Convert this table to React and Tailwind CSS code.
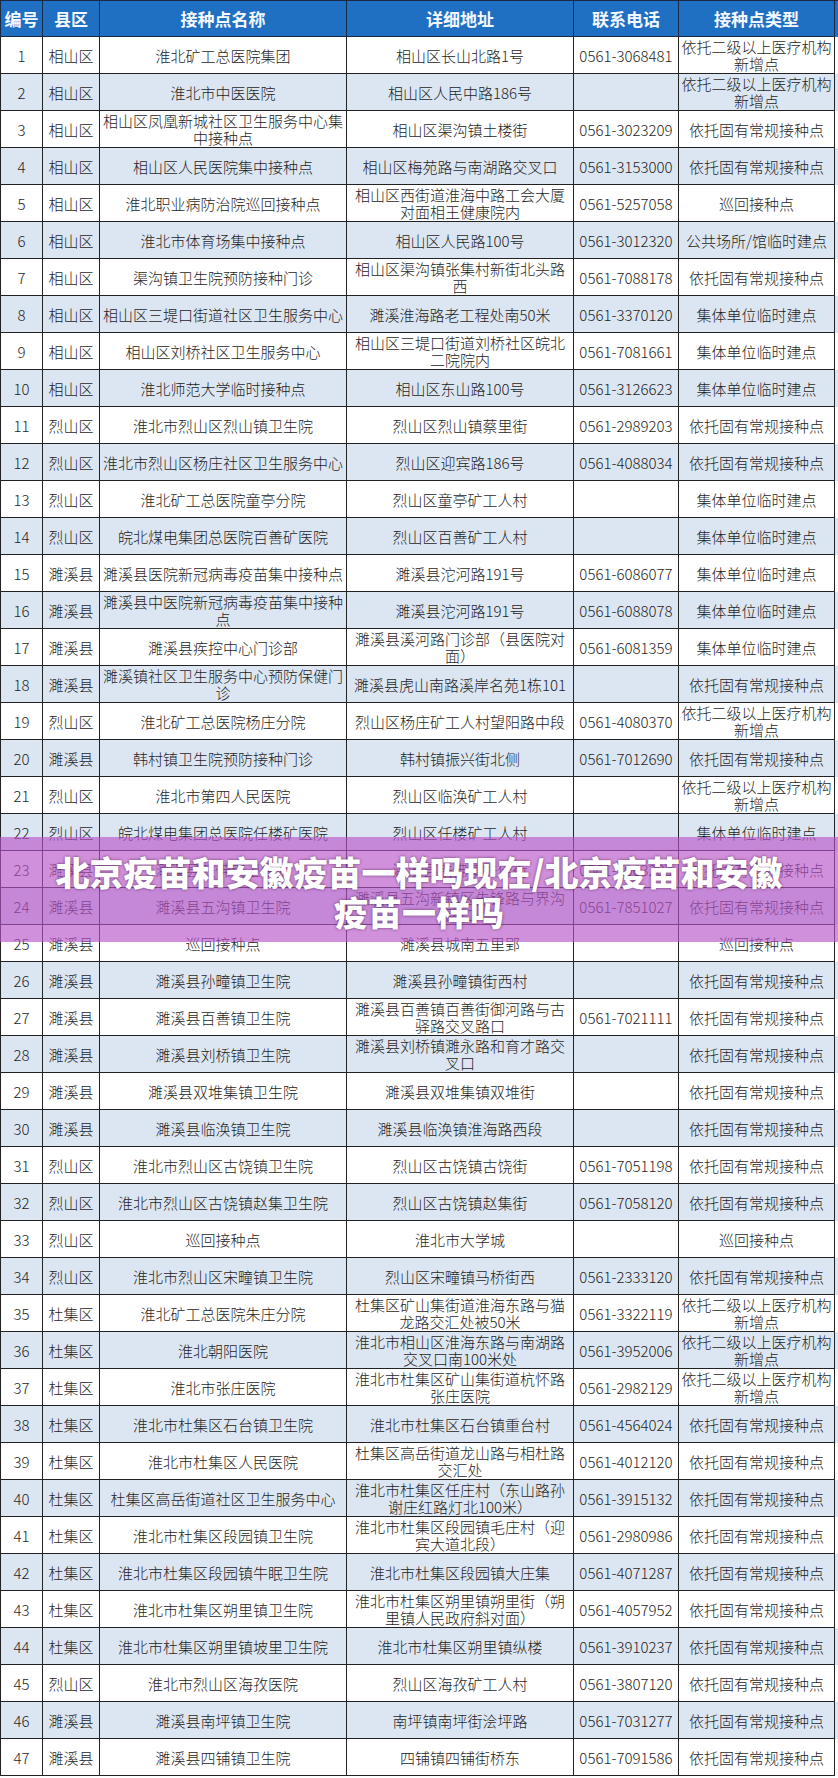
import React from "react";

const rows = [
    ["1", "相山区", "淮北矿工总医院集团", "相山区长山北路1号", "0561-3068481", "依托二级以上医疗机构新增点"],
    ["2", "相山区", "淮北市中医医院", "相山区人民中路186号", "", "依托二级以上医疗机构新增点"],
    ["3", "相山区", "相山区凤凰新城社区卫生服务中心集中接种点", "相山区渠沟镇土楼街", "0561-3023209", "依托固有常规接种点"],
    ["4", "相山区", "相山区人民医院集中接种点", "相山区梅苑路与南湖路交叉口", "0561-3153000", "依托固有常规接种点"],
    ["5", "相山区", "淮北职业病防治院巡回接种点", "相山区西街道淮海中路工会大厦对面相王健康院内", "0561-5257058", "巡回接种点"],
    ["6", "相山区", "淮北市体育场集中接种点", "相山区人民路100号", "0561-3012320", "公共场所/馆临时建点"],
    ["7", "相山区", "渠沟镇卫生院预防接种门诊", "相山区渠沟镇张集村新街北头路西", "0561-7088178", "依托固有常规接种点"],
    ["8", "相山区", "相山区三堤口街道社区卫生服务中心", "濉溪淮海路老工程处南50米", "0561-3370120", "集体单位临时建点"],
    ["9", "相山区", "相山区刘桥社区卫生服务中心", "相山区三堤口街道刘桥社区皖北二院院内", "0561-7081661", "集体单位临时建点"],
    ["10", "相山区", "淮北师范大学临时接种点", "相山区东山路100号", "0561-3126623", "集体单位临时建点"],
    ["11", "烈山区", "淮北市烈山区烈山镇卫生院", "烈山区烈山镇蔡里街", "0561-2989203", "依托固有常规接种点"],
    ["12", "烈山区", "淮北市烈山区杨庄社区卫生服务中心", "烈山区迎宾路186号", "0561-4088034", "依托固有常规接种点"],
    ["13", "烈山区", "淮北矿工总医院童亭分院", "烈山区童亭矿工人村", "", "集体单位临时建点"],
    ["14", "烈山区", "皖北煤电集团总医院百善矿医院", "烈山区百善矿工人村", "", "集体单位临时建点"],
    ["15", "濉溪县", "濉溪县医院新冠病毒疫苗集中接种点", "濉溪县沱河路191号", "0561-6086077", "集体单位临时建点"],
    ["16", "濉溪县", "濉溪县中医院新冠病毒疫苗集中接种点", "濉溪县沱河路191号", "0561-6088078", "集体单位临时建点"],
    ["17", "濉溪县", "濉溪县疾控中心门诊部", "濉溪县溪河路门诊部（县医院对面）", "0561-6081359", "集体单位临时建点"],
    ["18", "濉溪县", "濉溪镇社区卫生服务中心预防保健门诊", "濉溪县虎山南路溪岸名苑1栋101", "", "依托固有常规接种点"],
    ["19", "烈山区", "淮北矿工总医院杨庄分院", "烈山区杨庄矿工人村望阳路中段", "0561-4080370", "依托二级以上医疗机构新增点"],
    ["20", "濉溪县", "韩村镇卫生院预防接种门诊", "韩村镇振兴街北侧", "0561-7012690", "依托固有常规接种点"],
    ["21", "烈山区", "淮北市第四人民医院", "烈山区临涣矿工人村", "", "依托二级以上医疗机构新增点"],
    ["22", "烈山区", "皖北煤电集团总医院任楼矿医院", "烈山区任楼矿工人村", "", "集体单位临时建点"],
    ["23", "濉溪县", "濉溪县铁佛镇卫生院", "濉溪县铁佛镇铁佛街", "0561-7063283", "依托固有常规接种点"],
    ["24", "濉溪县", "濉溪县五沟镇卫生院", "濉溪县五沟新镇区先锋路与界沟路口", "0561-7851027", "依托固有常规接种点"],
    ["25", "濉溪县", "巡回接种点", "濉溪县城南五里郢", "", "巡回接种点"],
    ["26", "濉溪县", "濉溪县孙疃镇卫生院", "濉溪县孙疃镇街西村", "", "依托固有常规接种点"],
    ["27", "濉溪县", "濉溪县百善镇卫生院", "濉溪县百善镇百善街御河路与古驿路交叉路口", "0561-7021111", "依托固有常规接种点"],
    ["28", "濉溪县", "濉溪县刘桥镇卫生院", "濉溪县刘桥镇濉永路和育才路交叉口", "", "依托固有常规接种点"],
    ["29", "濉溪县", "濉溪县双堆集镇卫生院", "濉溪县双堆集镇双堆街", "", "依托固有常规接种点"],
    ["30", "濉溪县", "濉溪县临涣镇卫生院", "濉溪县临涣镇淮海路西段", "", "依托固有常规接种点"],
    ["31", "烈山区", "淮北市烈山区古饶镇卫生院", "烈山区古饶镇古饶街", "0561-7051198", "依托固有常规接种点"],
    ["32", "烈山区", "淮北市烈山区古饶镇赵集卫生院", "烈山区古饶镇赵集街", "0561-7058120", "依托固有常规接种点"],
    ["33", "烈山区", "巡回接种点", "淮北市大学城", "", "巡回接种点"],
    ["34", "烈山区", "淮北市烈山区宋疃镇卫生院", "烈山区宋疃镇马桥街西", "0561-2333120", "依托固有常规接种点"],
    ["35", "杜集区", "淮北矿工总医院朱庄分院", "杜集区矿山集街道淮海东路与猫龙路交汇处被50米", "0561-3322119", "依托二级以上医疗机构新增点"],
    ["36", "杜集区", "淮北朝阳医院", "淮北市相山区淮海东路与南湖路交叉口南100米处", "0561-3952006", "依托二级以上医疗机构新增点"],
    ["37", "杜集区", "淮北市张庄医院", "淮北市杜集区矿山集街道杭怀路张庄医院", "0561-2982129", "依托二级以上医疗机构新增点"],
    ["38", "杜集区", "淮北市杜集区石台镇卫生院", "淮北市杜集区石台镇重台村", "0561-4564024", "依托固有常规接种点"],
    ["39", "杜集区", "淮北市杜集区人民医院", "杜集区高岳街道龙山路与相杜路交汇处", "0561-4012120", "依托固有常规接种点"],
    ["40", "杜集区", "杜集区高岳街道社区卫生服务中心", "淮北市杜集区任庄村（东山路孙谢庄红路灯北100米）", "0561-3915132", "依托固有常规接种点"],
    ["41", "杜集区", "淮北市杜集区段园镇卫生院", "淮北市杜集区段园镇毛庄村（迎宾大道北段）", "0561-2980986", "依托固有常规接种点"],
    ["42", "杜集区", "淮北市杜集区段园镇牛眠卫生院", "淮北市杜集区段园镇大庄集", "0561-4071287", "依托固有常规接种点"],
    ["43", "杜集区", "淮北市杜集区朔里镇卫生院", "淮北市杜集区朔里镇朔里街（朔里镇人民政府斜对面）", "0561-4057952", "依托固有常规接种点"],
    ["44", "杜集区", "淮北市杜集区朔里镇坡里卫生院", "淮北市杜集区朔里镇纵楼", "0561-3910237", "依托固有常规接种点"],
    ["45", "烈山区", "淮北市烈山区海孜医院", "烈山区海孜矿工人村", "0561-3807120", "依托固有常规接种点"],
    ["46", "濉溪县", "濉溪县南坪镇卫生院", "南坪镇南坪街浍坪路", "0561-7031277", "依托固有常规接种点"],
    ["47", "濉溪县", "濉溪县四铺镇卫生院", "四铺镇四铺街桥东", "0561-7091586", "依托固有常规接种点"],
];

const headers = ["编号", "县区", "接种点名称", "详细地址", "联系电话", "接种点类型"];

const gridCols = "grid grid-cols-[43px_57px_247px_227px_105px_156px]";

function App() {
    return (
        <div className="relative w-[838px] bg-white font-['Noto_Sans_CJK_SC',sans-serif] text-[#1e1e1e]">
            {/* header */}
            <div className={`${gridCols} h-[37px] bg-[#1f6fc3] border-t border-[#1a2a44]`}>
                {headers.map((h, i) => (
                    <div
                        key={h}
                        className={`flex items-center justify-center text-[17px] font-bold text-[#f4f8ff] border-r border-b border-[#1a2a44] ${i === 0 ? "border-l" : ""}`}
                    >
                        {h}
                    </div>
                ))}
            </div>

            {/* rows */}
            {rows.map((row, idx) => (
                <div
                    key={row[0]}
                    className={`${gridCols} h-[37px] ${idx % 2 === 1 ? "bg-[#dce6f2]" : "bg-white"}`}
                >
                    {row.map((cell, i) => (
                        <div
                            key={i}
                            className={`flex items-center justify-center text-center text-[15px] leading-[17px] font-light border-r border-b border-[#222] ${i === 0 ? "border-l" : ""} ${i === 5 ? "px-0" : "px-[3px]"}`}
                        >
                            {cell}
                        </div>
                    ))}
                </div>
            ))}

            {/* title band over the table */}
            <div className="absolute left-0 right-0 top-[837px] h-[105px] bg-[#b955c8]/65 flex items-center justify-center pt-1">
                <div className="text-center text-white font-black text-[34px] leading-[40px] [text-shadow:0_0_3px_rgba(60,20,60,0.7)]">
                    北京疫苗和安徽疫苗一样吗现在/北京疫苗和安徽
                    <br />
                    疫苗一样吗
                </div>
            </div>
        </div>
    );
}

export default App;
